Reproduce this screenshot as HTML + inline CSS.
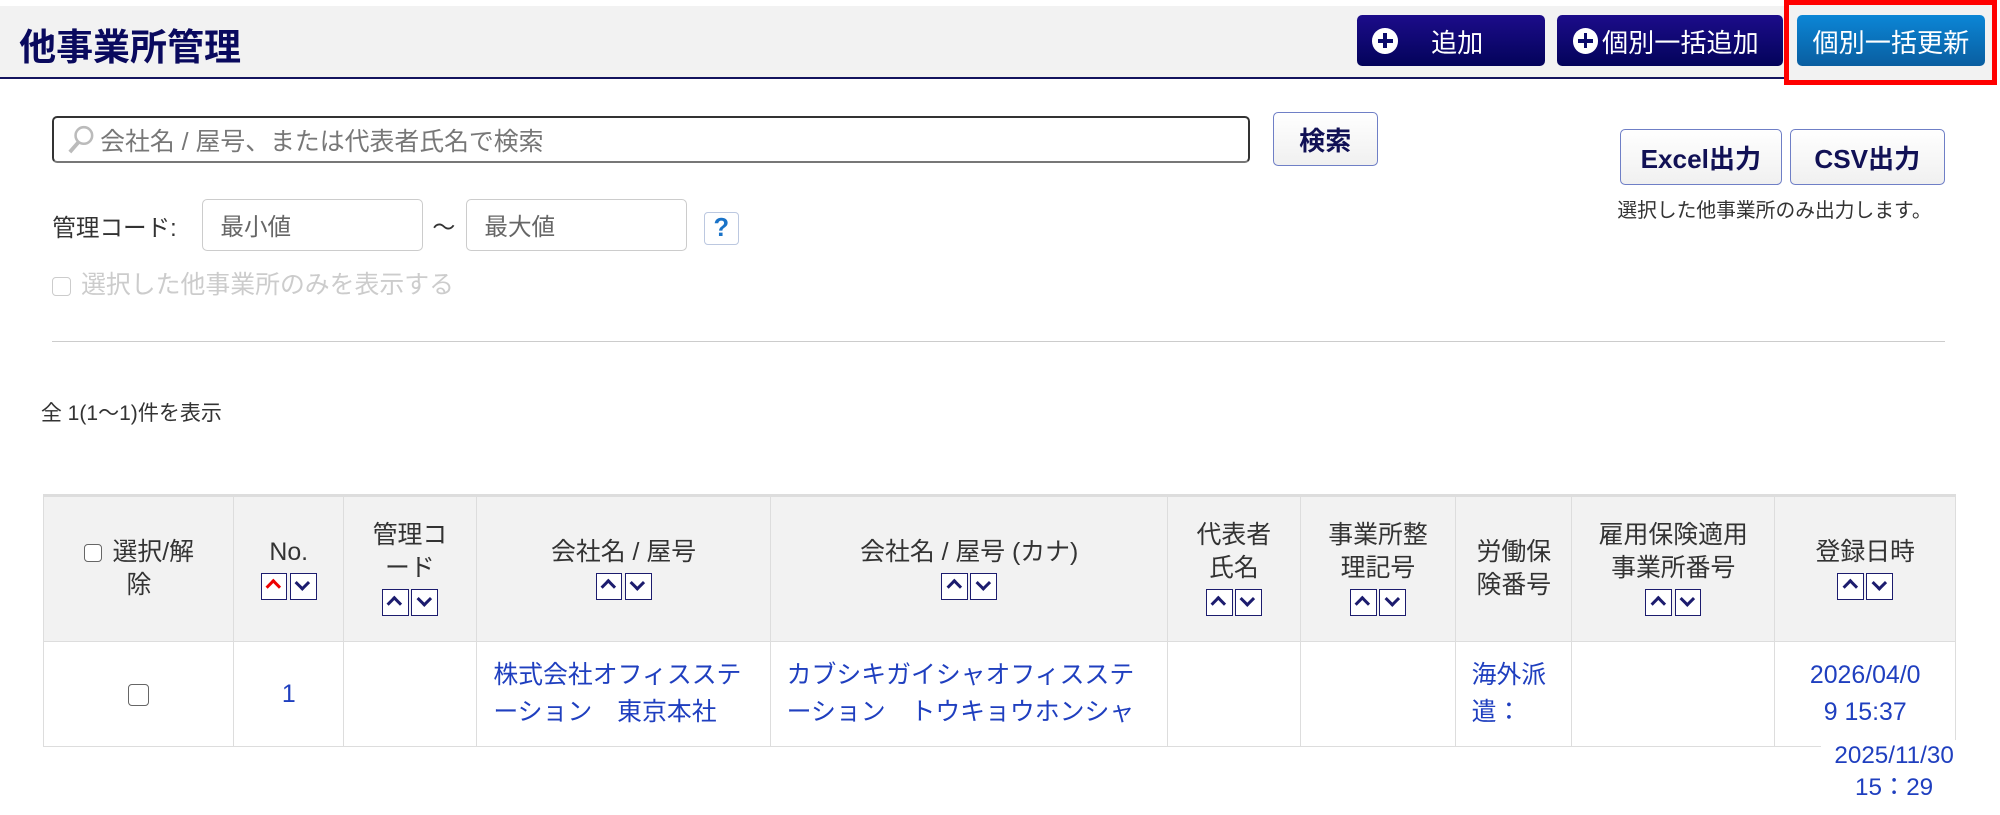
<!DOCTYPE html>
<html><head><meta charset="utf-8">
<style>
html,body{margin:0;padding:0;background:#fff;overflow:hidden}
body{width:2000px;height:815px}
#w{zoom:1.2755;width:1568px;height:639px;position:relative;font-family:"Liberation Sans","Noto Sans CJK JP",sans-serif;color:#333}
.a{position:absolute}
.hdr{left:0;top:5px;width:1400px;height:55px;background:#f2f2f2;border-bottom:2px solid #14145e}
.title{left:15px;top:13px;font-size:29px;font-weight:bold;color:#0a0a5e;letter-spacing:0}
.btn{height:40px;border-radius:4px;color:#fff;font-size:20.5px;display:flex;align-items:center;box-sizing:border-box}
.nv{background:linear-gradient(#1c0c8a,#03035a)}
.pl{width:20px;height:20px;border-radius:50%;background:#fff;position:relative;display:inline-block;margin:0 6px 0 12px}
.pl:before,.pl:after{content:"";position:absolute;background:#0a0a6a}
.pl:before{left:4px;top:8.5px;width:12px;height:3px}
.pl:after{left:8.5px;top:4px;width:3px;height:12px}
.wb{background:linear-gradient(#fff,#f0f0f0);border:1.5px solid #6f7fc6;border-radius:4px;color:#111155;font-weight:bold;display:flex;align-items:center;justify-content:center;font-size:20.5px;box-sizing:border-box}
.inp{border:1px solid #ccc;border-radius:4px;box-sizing:border-box;font-size:18.5px;color:#666;display:flex;align-items:center;padding-left:14px}
.sb{display:inline-block;width:21px;height:21px;border:1.5px solid #1c1c6e;background:#fff;margin:0 1px;position:relative;vertical-align:middle;box-sizing:border-box}
.sb:before{content:"";position:absolute;left:5px;width:6px;height:6px;border-left:2.5px solid #1c1c6e;border-top:2.5px solid #1c1c6e}
.u:before{top:6px;transform:rotate(45deg)}
.d:before{top:3px;transform:rotate(225deg)}
.r:before{border-color:#e00}
table{border-collapse:collapse;position:absolute;left:34px;top:387px;font-size:19.5px;table-layout:fixed}
th{background:#f2f2f2;font-weight:normal;color:#333;border:1px solid #ddd;height:113px;line-height:26px;vertical-align:middle;padding:0 6px}
td{border:1px solid #ddd;height:82px;line-height:29px;color:#1f3fbf;text-align:left;padding:0 12px;vertical-align:middle}
tr:first-child th{border-top:3px solid #ddd}
td.c{text-align:center}
.cb{display:inline-block;width:13px;height:13px;border:1px solid #666;border-radius:3px;vertical-align:middle;background:#fff}
</style></head><body><div id="w">
<div class="a hdr"></div>
<div class="a title">他事業所管理</div>
<div class="a btn nv" style="left:1064px;top:12px;width:147px"><span class="pl"></span><span style="margin-left:20px">追加</span></div>
<div class="a btn nv" style="left:1221px;top:12px;width:177px"><span class="pl" style="margin:0 3px 0 12px"></span>個別一括追加</div>
<div class="a" style="left:1399px;top:0;width:167px;height:67px;border:4px solid #f00;box-sizing:border-box;background:#f2f2f2"></div>
<div class="a btn" style="left:1409px;top:12px;width:147px;background:linear-gradient(#0b86d6,#0a5ea0);justify-content:center">個別一括更新</div>

<div class="a" style="left:41px;top:91px;width:939px;height:37px;border:2px solid #333;border-bottom-color:#777;border-radius:4px;box-sizing:border-box;display:flex;align-items:center;font-size:19.5px;color:#777">
<svg width="24" height="24" style="margin:0 3px 0 9px"><circle cx="14" cy="9" r="6.5" fill="none" stroke="#bbb" stroke-width="2"/><line x1="10" y1="14" x2="3" y2="22" stroke="#bbb" stroke-width="3"/></svg>会社名 / 屋号、または代表者氏名で検索</div>
<div class="a wb" style="left:998px;top:88px;width:82px;height:42px">検索</div>
<div class="a wb" style="left:1270px;top:101px;width:127px;height:44px">Excel出力</div>
<div class="a wb" style="left:1403px;top:101px;width:122px;height:44px">CSV出力</div>
<div class="a" style="left:1268px;top:152px;font-size:15.5px;color:#333">選択した他事業所のみ出力します。</div>

<div class="a" style="left:41px;top:164px;font-size:18.5px;color:#333">管理コード:</div>
<div class="a inp" style="left:158px;top:156px;width:174px;height:41px">最小値</div>
<div class="a" style="left:339px;top:163px;font-size:18px">～</div>
<div class="a inp" style="left:365px;top:156px;width:174px;height:41px">最大値</div>
<div class="a" style="left:552px;top:166px;width:27px;height:26px;border:1px solid #bcc8e0;border-radius:3px;box-sizing:border-box;color:#1a73c8;font-weight:bold;font-size:20px;text-align:center;line-height:25px">?</div>
<div class="a" style="left:41px;top:208px;font-size:19.5px;color:#ccc"><span class="cb" style="border-color:#ccc;margin-right:8px"></span>選択した他事業所のみを表示する</div>
<div class="a" style="left:41px;top:267px;width:1484px;height:1px;background:#ccc"></div>
<div class="a" style="left:32px;top:311px;font-size:16.5px;color:#333">全 1(1～1)件を表示</div>

<table>
<colgroup><col style="width:149px"><col style="width:86px"><col style="width:104px"><col style="width:231px"><col style="width:311px"><col style="width:104px"><col style="width:122px"><col style="width:91px"><col style="width:159px"><col style="width:142px"></colgroup>
<tr>
<th><span class="cb" style="margin-right:8px"></span>選択/解<br>除</th>
<th>No.<br><span class="sb u r"></span><span class="sb d"></span></th>
<th>管理コ<br>ード<br><span class="sb u"></span><span class="sb d"></span></th>
<th>会社名 / 屋号<br><span class="sb u"></span><span class="sb d"></span></th>
<th>会社名 / 屋号 (カナ)<br><span class="sb u"></span><span class="sb d"></span></th>
<th>代表者<br>氏名<br><span class="sb u"></span><span class="sb d"></span></th>
<th>事業所整<br>理記号<br><span class="sb u"></span><span class="sb d"></span></th>
<th>労働保<br>険番号</th>
<th>雇用保険適用<br>事業所番号<br><span class="sb u"></span><span class="sb d"></span></th>
<th>登録日時<br><span class="sb u"></span><span class="sb d"></span></th>
</tr>
<tr>
<td class="c"><span class="cb" style="width:15px;height:15px"></span></td>
<td class="c">1</td>
<td></td>
<td style="padding-left:13px">株式会社オフィスステ<br>ーション　東京本社</td>
<td style="padding-left:12px">カブシキガイシャオフィスステ<br>ーション　トウキョウホンシャ</td>
<td></td><td></td>
<td>海外派<br>遣：</td>
<td></td>
<td class="c" style="padding:0 8px">2026/04/0<br>9 15:37</td>
</tr>
</table>
<div class="a" style="left:1428px;top:580px;width:114px;text-align:center;font-size:19px;line-height:25px;color:#1f3fbf;background:#fff">2025/11/30<br>15：29</div>
</div></body></html>
